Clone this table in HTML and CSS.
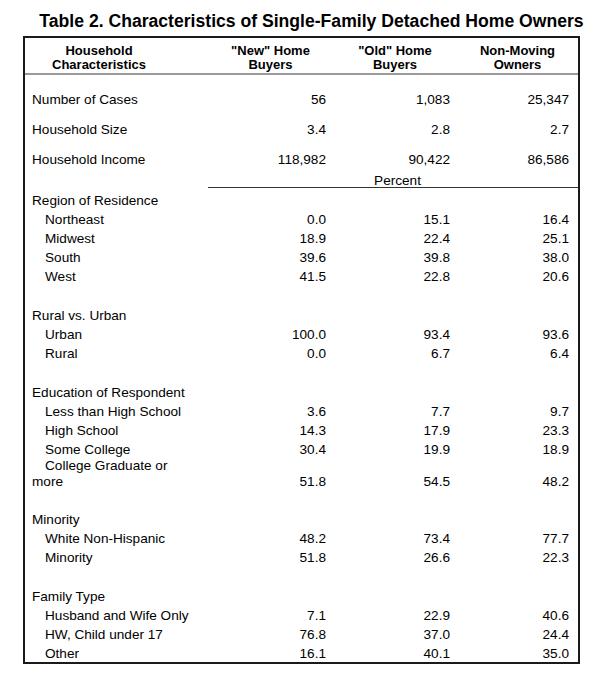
FILE: index.html
```html
<!DOCTYPE html>
<html>
<head>
<meta charset="utf-8">
<link rel="stylesheet" href="styles.css">
</head>
<body>
<h1 class="title">Table 2. Characteristics of Single-Family Detached Home Owners</h1>
<div class="table">
  <div class="head grid">
    <div class="hcell h1c">Household<br>Characteristics</div>
    <div class="hcell h2c">"New" Home<br>Buyers</div>
    <div class="hcell h3c">"Old" Home<br>Buyers</div>
    <div class="hcell h4c">Non-Moving<br>Owners</div>
  </div>
  <div class="body">
    <div class="grid row big"><div class="label">Number of Cases</div><div class="v">56</div><div class="v">1,083</div><div class="v last">25,347</div></div>
    <div class="grid row big"><div class="label">Household Size</div><div class="v">3.4</div><div class="v">2.8</div><div class="v last">2.7</div></div>
    <div class="grid row big"><div class="label">Household Income</div><div class="v">118,982</div><div class="v">90,422</div><div class="v last">86,586</div></div>
    <div class="grid pct-row"><div class="pct">Percent</div></div>

    <div class="grid row first"><div class="label">Region of Residence</div></div>
    <div class="grid row"><div class="label sub">Northeast</div><div class="v">0.0</div><div class="v">15.1</div><div class="v last">16.4</div></div>
    <div class="grid row"><div class="label sub">Midwest</div><div class="v">18.9</div><div class="v">22.4</div><div class="v last">25.1</div></div>
    <div class="grid row"><div class="label sub">South</div><div class="v">39.6</div><div class="v">39.8</div><div class="v last">38.0</div></div>
    <div class="grid row"><div class="label sub">West</div><div class="v">41.5</div><div class="v">22.8</div><div class="v last">20.6</div></div>
    <div class="blank"></div>

    <div class="grid row"><div class="label">Rural vs. Urban</div></div>
    <div class="grid row"><div class="label sub">Urban</div><div class="v">100.0</div><div class="v">93.4</div><div class="v last">93.6</div></div>
    <div class="grid row"><div class="label sub">Rural</div><div class="v">0.0</div><div class="v">6.7</div><div class="v last">6.4</div></div>
    <div class="blank"></div>

    <div class="grid row"><div class="label">Education of Respondent</div></div>
    <div class="grid row"><div class="label sub">Less than High School</div><div class="v">3.6</div><div class="v">7.7</div><div class="v last">9.7</div></div>
    <div class="grid row"><div class="label sub">High School</div><div class="v">14.3</div><div class="v">17.9</div><div class="v last">23.3</div></div>
    <div class="grid row"><div class="label sub">Some College</div><div class="v">30.4</div><div class="v">19.9</div><div class="v last">18.9</div></div>
    <div class="grid row wrap"><div class="label sub">College Graduate or more</div><div class="v">51.8</div><div class="v">54.5</div><div class="v last">48.2</div></div>
    <div class="blank"></div>

    <div class="grid row"><div class="label">Minority</div></div>
    <div class="grid row"><div class="label sub">White Non-Hispanic</div><div class="v">48.2</div><div class="v">73.4</div><div class="v last">77.7</div></div>
    <div class="grid row"><div class="label sub">Minority</div><div class="v">51.8</div><div class="v">26.6</div><div class="v last">22.3</div></div>
    <div class="blank"></div>

    <div class="grid row"><div class="label">Family Type</div></div>
    <div class="grid row"><div class="label sub">Husband and Wife Only</div><div class="v">7.1</div><div class="v">22.9</div><div class="v last">40.6</div></div>
    <div class="grid row"><div class="label sub">HW, Child under 17</div><div class="v">76.8</div><div class="v">37.0</div><div class="v last">24.4</div></div>
    <div class="grid row end"><div class="label sub">Other</div><div class="v">16.1</div><div class="v">40.1</div><div class="v last">35.0</div></div>
  </div>
</div>
</body>
</html>
```

FILE: styles.css
```css
html, body {
  margin: 0;
  padding: 0;
  background: #ffffff;
  color: #000000;
  font-family: "Liberation Sans", Arial, sans-serif;
}

.title {
  margin: 11px 0 5px 23px;
  font-size: 17.6px;
  line-height: 20px;
  font-weight: bold;
  text-align: center;
}

.table {
  margin-left: 23px;
  width: 557px;
  box-sizing: border-box;
  border: 2px solid #1a1a1a;
}

.grid {
  display: grid;
  grid-template-columns: 148px 35px 125px 124px 121px;
}

.head {
  padding: 6px 0 1px;
  border-bottom: 2px solid #9a9a9a;
  font-size: 13px;
  line-height: 14px;
  font-weight: bold;
}

.hcell {
  text-align: center;
}

.h1c { grid-column: 1; }
.h2c { grid-column: 3; }
.h3c { grid-column: 4; }
.h4c { grid-column: 5; }

.body {
  padding-top: 10px;
  font-size: 13.6px;
}

.row {
  height: 19px;
  line-height: 19px;
  align-items: end;
}

.row.big {
  height: 30px;
  line-height: 30px;
}

.row.first {
  margin-top: 4px;
}

.row.wrap {
  height: 32px;
  line-height: 16px;
  margin-top: -1px;
}

.row.end {
  height: 18px;
}

.blank {
  height: 20px;
}

.label {
  grid-column: 1 / 3;
  padding: 0 12px 0 7px;
}

.label.sub {
  text-indent: 13px;
}

.v {
  text-align: right;
  padding-right: 7px;
}

.v.last {
  padding-right: 9px;
}

.pct-row {
  height: 12px;
}

.pct {
  grid-column: 3 / 6;
  text-align: center;
  padding-left: 9px;
  line-height: 12px;
  border-bottom: 1px solid #333333;
}
```
